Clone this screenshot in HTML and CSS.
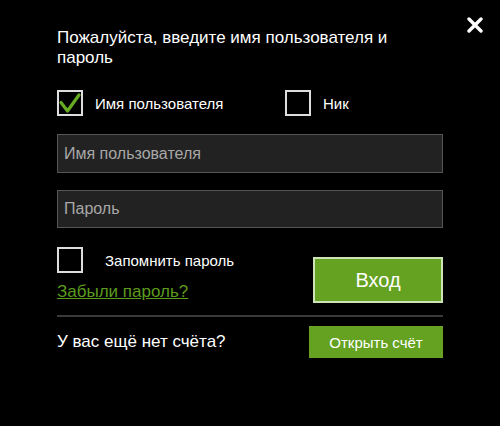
FILE: index.html
```html
<!DOCTYPE html>
<html lang="ru">
<head>
    <meta charset="UTF-8">
    <meta name="viewport" content="width=device-width, initial-scale=1.0">
    <title>Вход</title>
    <link rel="stylesheet" href="styles.css">
</head>
<body>
    <div class="login">
        <button class="close-btn" type="button" aria-label="Закрыть">
            <svg width="16" height="16" viewBox="0 0 16 16">
                <path d="M2 2 L14 14 M14 2 L2 14" stroke="#fff" stroke-width="3.4" stroke-linecap="round"/>
            </svg>
        </button>

        <h2 class="title">Пожалуйста, введите имя пользователя и пароль</h2>

        <div class="mode-row">
            <label class="check">
                <span class="box checked">
                    <svg width="26" height="26" viewBox="0 0 26 26">
                        <path d="M4 12.5 L10.5 21 L22 5" fill="none" stroke="#67ab22" stroke-width="3.2" stroke-linecap="round" stroke-linejoin="round"/>
                    </svg>
                </span>
                <span>Имя пользователя</span>
            </label>
            <label class="check">
                <span class="box"></span>
                <span>Ник</span>
            </label>
        </div>

        <input class="field" type="text" placeholder="Имя пользователя">
        <input class="field" type="password" placeholder="Пароль">

        <div class="action-row">
            <div class="left-col">
                <label class="check remember">
                    <span class="box"></span>
                    <span>Запомнить пароль</span>
                </label>
                <a href="#" class="forgot">Забыли пароль?</a>
            </div>
            <button class="login-btn" type="button">Вход</button>
        </div>

        <div class="signup-row">
            <span>У вас ещё нет счёта?</span>
            <button class="signup-btn" type="button">Открыть счёт</button>
        </div>
    </div>
</body>
</html>
```

FILE: styles.css
```css
body {
    margin: 0;
    padding: 0;
    background: #000;
    color: #fff;
    font-family: "Liberation Sans", Arial, sans-serif;
    width: 500px;
    height: 426px;
    overflow: hidden;
}

.login {
    position: relative;
    padding: 28px 57px 0 57px;
}

.close-btn {
    position: absolute;
    top: 17px;
    right: 17px;
    background: none;
    border: none;
    padding: 0;
    width: 16px;
    height: 16px;
    cursor: pointer;
}

.close-btn svg {
    display: block;
}

.title {
    margin: 0;
    font-size: 17px;
    font-weight: normal;
    line-height: 20px;
    width: 350px;
}

.mode-row {
    display: grid;
    grid-template-columns: 228px 1fr;
    margin-top: 22px;
}

.check {
    display: flex;
    align-items: center;
    gap: 12px;
    font-size: 15px;
    cursor: pointer;
}

.box {
    width: 22px;
    height: 22px;
    border: 2px solid #ddd;
    display: flex;
    align-items: center;
    justify-content: center;
    flex-shrink: 0;
}

.box svg {
    margin: -2px;
}

.field {
    display: block;
    box-sizing: border-box;
    width: 386px;
    height: 39px;
    margin-top: 18px;
    background: #222;
    border: 1px solid #555;
    color: #ddd;
    font-family: "Liberation Sans", Arial, sans-serif;
    font-size: 16px;
    padding: 0 6px;
    outline: none;
}

.field + .field {
    margin-top: 17px;
    height: 38px;
}

.field::placeholder {
    color: #a8a8a8;
}

.action-row {
    display: flex;
    justify-content: space-between;
    margin-top: 19px;
}

.remember {
    gap: 22px;
    font-size: 15px;
}

.forgot {
    display: block;
    margin-top: 9px;
    color: #5c9c1c;
    font-size: 17px;
}

.login-btn {
    width: 130px;
    height: 46px;
    margin-top: 10px;
    background: #66a222;
    border: 2px solid #cfe3b8;
    color: #fff;
    font-family: "Liberation Sans", Arial, sans-serif;
    font-size: 20px;
    cursor: pointer;
}

.signup-row {
    display: flex;
    justify-content: space-between;
    align-items: center;
    margin-top: 12px;
    padding-top: 9px;
    border-top: 2px solid #3a3a3a;
    font-size: 17px;
}

.signup-btn {
    width: 134px;
    height: 32px;
    background: #66a222;
    border: none;
    color: #fff;
    font-family: "Liberation Sans", Arial, sans-serif;
    font-size: 15px;
    cursor: pointer;
}
```
